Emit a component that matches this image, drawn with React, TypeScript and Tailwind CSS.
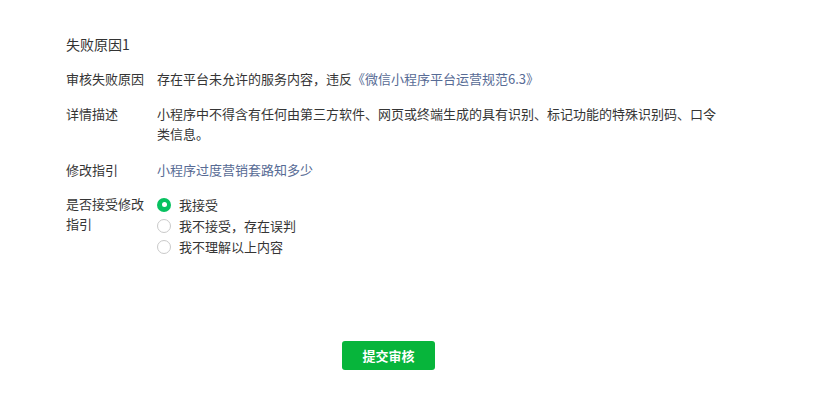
export default function App() {
  const options = ['我接受', '我不接受，存在误判', '我不理解以上内容'];

  return (
    <div className="w-[828px] h-[408px] bg-white text-[#353535] font-['Noto_Sans_CJK_SC',sans-serif] text-[13px]">
      <div className="pl-[66px] pt-[34px]">
        <div className="text-[14px] leading-[20px] text-[#333]">失败原因1</div>

        <div className="mt-[15px] flex leading-[20px]">
          <div className="w-[80px] mr-[11px] shrink-0">审核失败原因</div>
          <div>
            存在平台未允许的服务内容，违反
            <span className="text-[#576b95]">《微信小程序平台运营规范6.3》</span>
          </div>
        </div>

        <div className="mt-[15px] flex leading-[20px]">
          <div className="w-[80px] mr-[11px] shrink-0">详情描述</div>
          <div className="w-[562px]">
            小程序中不得含有任何由第三方软件、网页或终端生成的具有识别、标记功能的特殊识别码、口令类信息。
          </div>
        </div>

        <div className="mt-[16px] flex leading-[20px]">
          <div className="w-[80px] mr-[11px] shrink-0">修改指引</div>
          <div className="text-[#576b95]">小程序过度营销套路知多少</div>
        </div>

        <div className="mt-[14px] flex leading-[20px]">
          <div className="w-[80px] mr-[11px] shrink-0">是否接受修改指引</div>
          <div className="flex flex-col">
            {options.map((o, i) => (
              <label key={o} className="flex items-center h-[21px]">
                {i === 0 ? (
                  <span className="w-[14px] h-[14px] rounded-full bg-[#07c160] flex items-center justify-center">
                    <span className="w-[5px] h-[5px] rounded-full bg-white" />
                  </span>
                ) : (
                  <span className="w-[14px] h-[14px] rounded-full border border-[#c9c9c9] bg-white" />
                )}
                <span className="ml-[8px]">{o}</span>
              </label>
            ))}
          </div>
        </div>
      </div>

      <div className="mt-[84px] pl-[342px]">
        <button className="w-[93px] h-[29px] rounded-[3px] bg-[#07b53b] text-white text-[13px] font-bold">
          提交审核
        </button>
      </div>
    </div>
  );
}
